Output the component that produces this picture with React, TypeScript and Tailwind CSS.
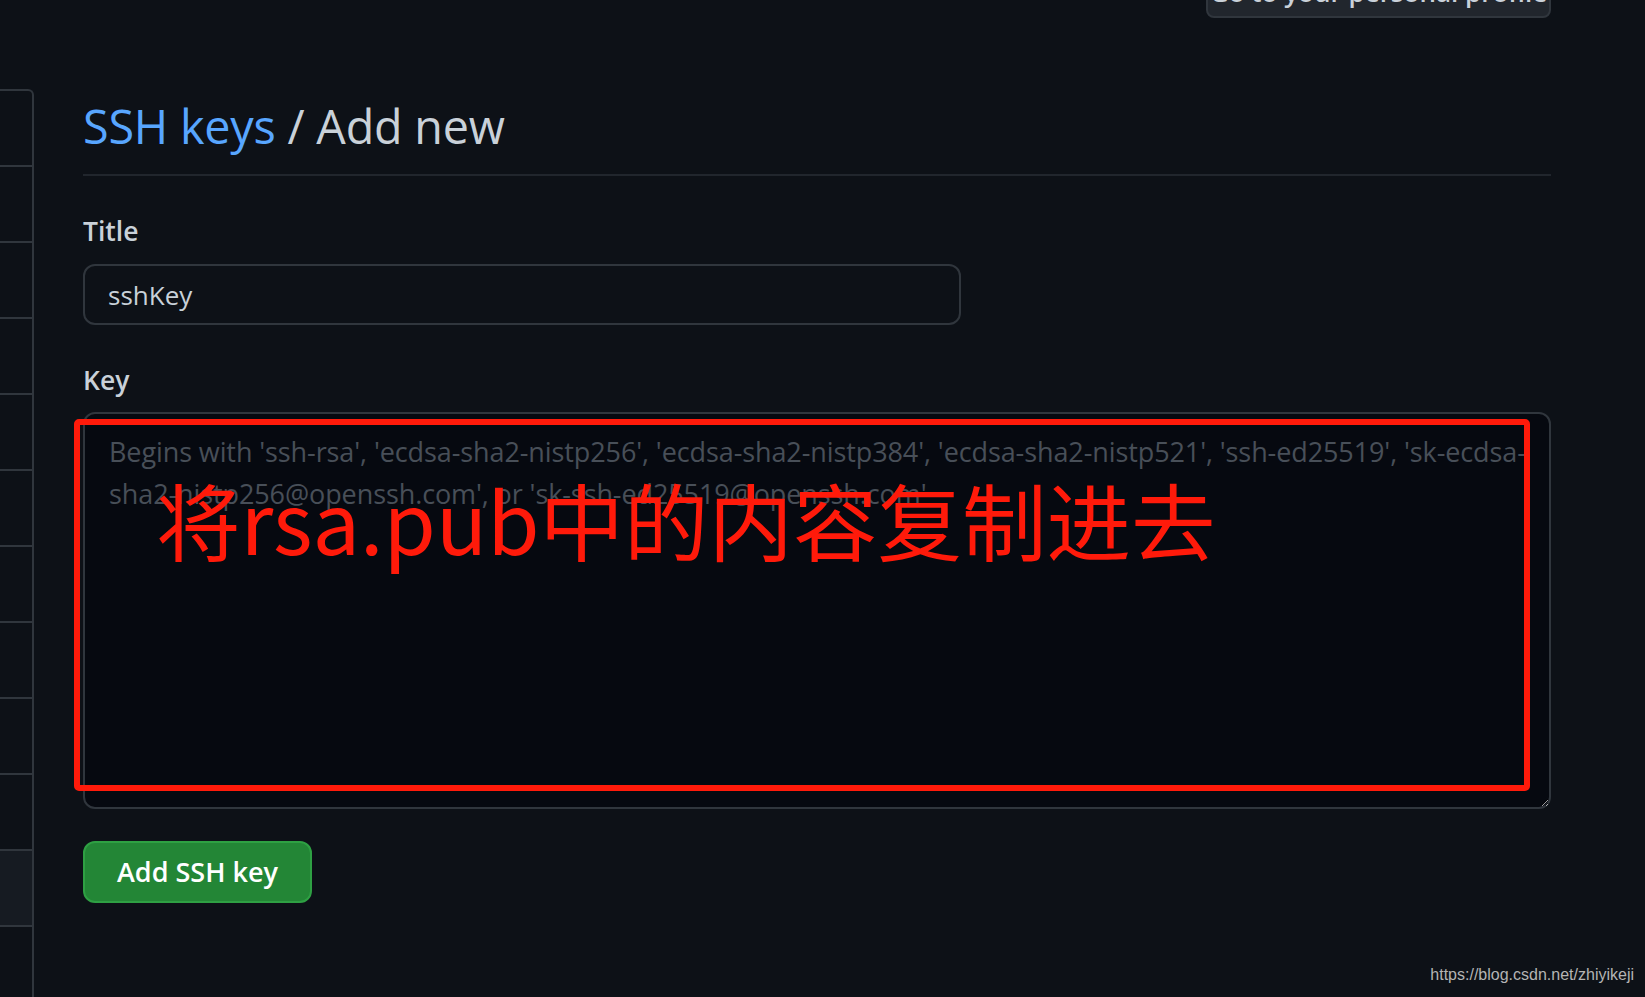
const PLACEHOLDER =
  "Begins with 'ssh-rsa', 'ecdsa-sha2-nistp256', 'ecdsa-sha2-nistp384', 'ecdsa-sha2-nistp521', 'ssh-ed25519', 'sk-ecdsa-\nsha2-nistp256@openssh.com', or 'sk-ssh-ed25519@openssh.com'"

const SIDEBAR_ROWS = 11

export default function App() {
  return (
    <div className="relative h-[997px] w-full overflow-hidden bg-[#0d1117] font-['Open_Sans',sans-serif] text-[#c9d1d9]">
      <div className="flex">
        {/* settings menu, only its right edge is in view */}
        <div className="mt-[89px] flex w-[34px] shrink-0 flex-col rounded-tr-md border-t-2 border-r-2 border-[#30363d]">
          {Array.from({ length: SIDEBAR_ROWS }).map((_, i) => (
            <div
              key={i}
              className={`h-[76px] border-b-2 border-[#30363d] ${i === 10 ? 'bg-[#161b22]' : ''}`}
            />
          ))}
          <div className="h-[200px]" />
        </div>

        <div className="ml-[49px] w-[1468px]">
          <div className="-mt-[40px] flex justify-end">
            <button className="flex h-[58px] w-[345px] items-end justify-center whitespace-nowrap rounded-lg border-2 border-[#30363d] bg-[#21262d] pb-[11px] text-[26px] font-semibold leading-none text-[#c9d1d9]">
              Go to your personal profile
            </button>
          </div>

          <h2 className="mt-[72px] border-b-2 border-[#21262d] pb-[12px] text-[46.7px] leading-[72px] font-normal tracking-[-0.2px]">
            <span className="text-[#58a6ff]">SSH keys</span> / Add new
          </h2>

          <form>
            <label className="mt-[37px] block text-[26.5px] leading-[36px] font-semibold">Title</label>
            <input
              defaultValue="sshKey"
              className="mt-[15px] h-[61px] w-[878px] rounded-xl border-2 border-[#30363d] bg-[#0d1117] px-[23px] text-[26px] text-[#c9d1d9] outline-none"
            />

            <label className="mt-[37px] block text-[26.5px] leading-[36px] font-semibold">Key</label>
            <textarea
              placeholder={PLACEHOLDER}
              className="mt-[14px] block h-[397px] w-full rounded-xl border-2 border-[#30363d] bg-[#060910] pl-[24px] pr-[12px] pt-[17px] text-[27px] leading-[42px] tracking-[-0.1px] text-[#c9d1d9] outline-none placeholder:text-[#484f58]"
            />

            <button
              type="button"
              className="mt-[32px] h-[62px] w-[229px] rounded-xl border-2 border-[#2ea043] bg-[#238636] text-[27px] font-semibold text-white"
            >
              Add SSH key
            </button>
          </form>
        </div>
      </div>

      {/* red annotation drawn over the screenshot */}
      <div className="absolute left-[74px] top-[419px] h-[372px] w-[1456px] rounded-[5px] border-[6px] border-[#ff1a0a]" />
      <div className="absolute left-[156px] top-[463px] text-[84.5px] leading-[110px] text-[#ff1a0a] font-['Noto_Sans_CJK_SC',sans-serif]">
        将rsa.pub中的内容复制进去
      </div>

      <div className="absolute bottom-[10px] right-[11px] text-[16px] text-[#b4b4b4] font-['Liberation_Sans',sans-serif]">
        https://blog.csdn.net/zhiyikeji
      </div>
    </div>
  )
}
